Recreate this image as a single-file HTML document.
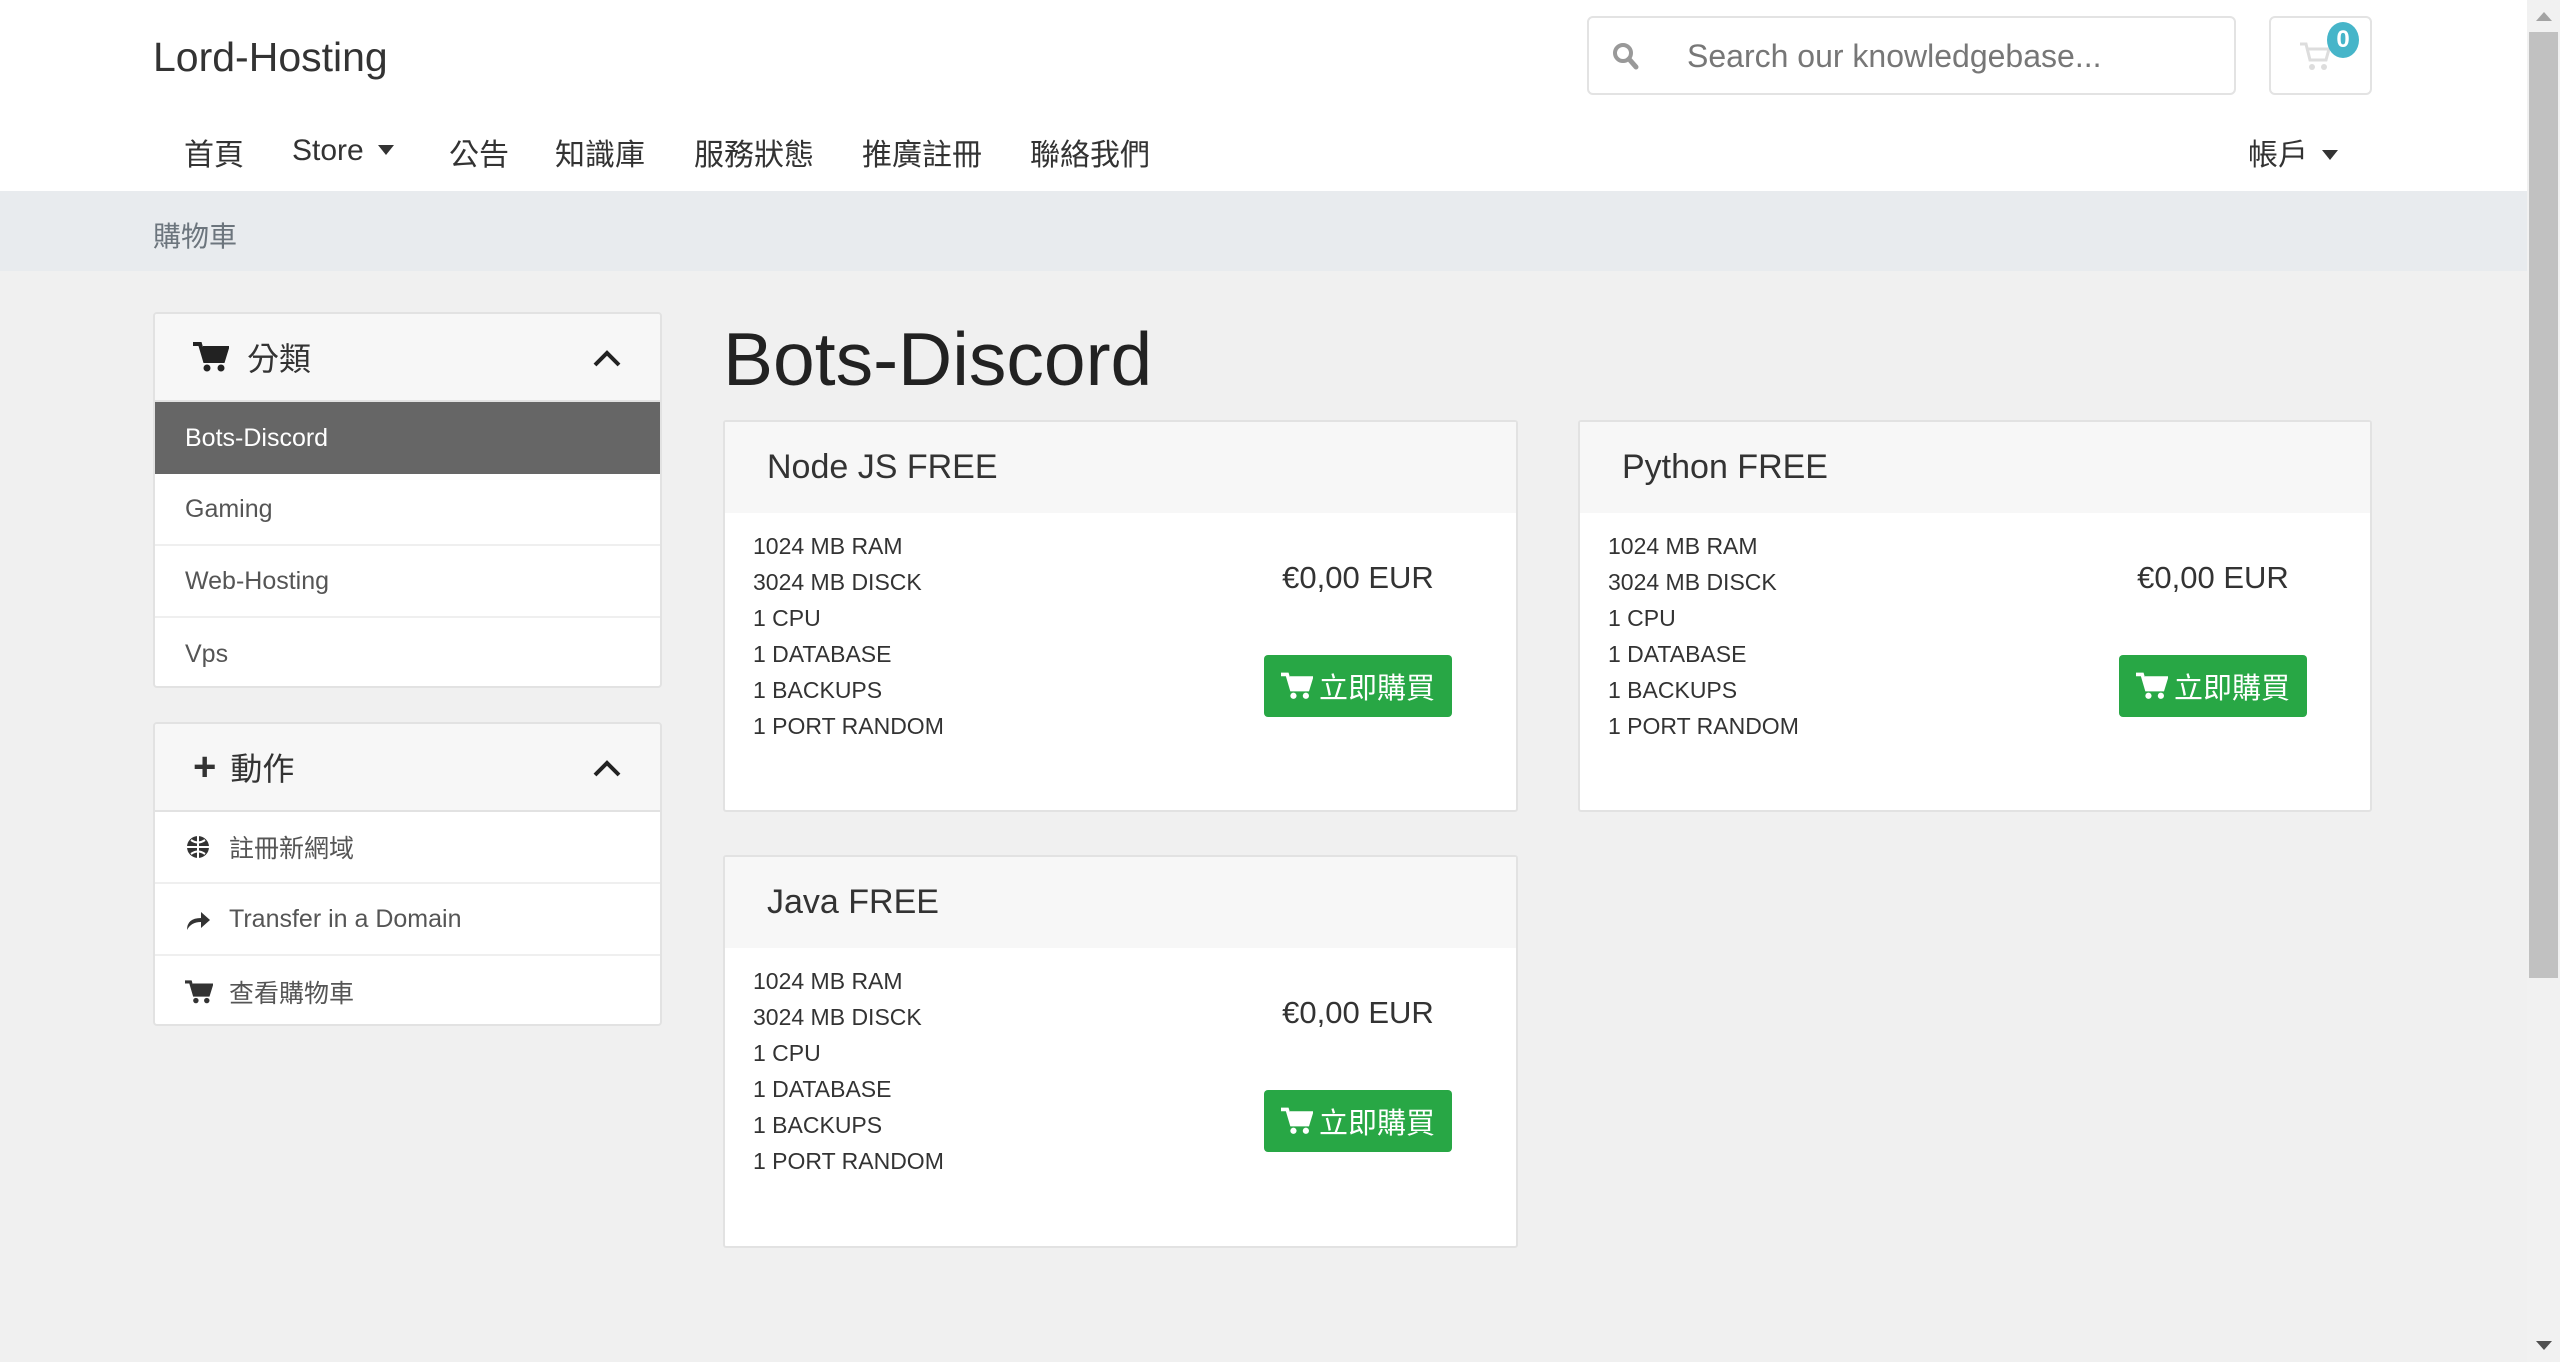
<!DOCTYPE html>
<html><head><meta charset="utf-8"><style>
*{box-sizing:border-box;margin:0;padding:0}
body{width:2560px;height:1362px;overflow:hidden;background:#f0f0f0;font-family:"Liberation Sans","Noto Sans CJK TC",sans-serif;color:#333;position:relative}
.a{position:absolute}
.hdr{left:0;top:0;width:2527px;height:191px;background:#fff}
.bc{left:0;top:191px;width:2527px;height:80px;background:#e8ebee}
.nav{top:130px;font-size:30px;color:#333;white-space:nowrap}
.caret{display:inline-block;width:0;height:0;border-left:8px solid transparent;border-right:8px solid transparent;border-top:10px solid #333;vertical-align:middle;margin-left:14px;margin-top:-4px}
.panel{background:#fff;border:2px solid #e2e2e2;border-radius:4px;overflow:hidden}
.ph{background:#f7f7f7;border-bottom:2px solid #e2e2e2;height:88px;display:flex;align-items:center;padding-left:38px;font-size:32px;position:relative}
.it{height:72px;display:flex;align-items:center;padding-left:30px;font-size:25px;color:#555;border-bottom:2px solid #efefef}
.it:last-child{border-bottom:none}
.card{background:#fff;border:2px solid #e2e2e2;border-radius:3px;overflow:hidden}
.ch{background:#f7f7f7;height:91px;display:flex;align-items:center;padding-left:42px;font-size:34px}
.feat{position:absolute;left:28px;top:106px;font-size:23px;line-height:36px;color:#333}
.price{position:absolute;left:540px;top:138px;width:186px;text-align:center;font-size:31px}
.btn{position:absolute;left:539px;top:233px;width:188px;height:62px;background:#28a745;border-radius:4px;color:#fff;font-size:29px;display:flex;align-items:center;justify-content:center;gap:6px}
.chev{position:absolute;right:38px;top:34px}
</style></head><body>
<div class="a hdr"></div>
<div class="a" style="left:153px;top:34px;font-size:41px;color:#333">Lord-Hosting</div>
<div class="a" style="left:1587px;top:16px;width:649px;height:79px;border:2px solid #e3e3e3;border-radius:6px;background:#fff"></div>
<svg class="a" style="left:1612px;top:42px" width="28" height="30" viewBox="0 0 28 30"><circle cx="11" cy="11" r="8" fill="none" stroke="#999" stroke-width="4"/><path d="M17 17l7 8" stroke="#999" stroke-width="5" stroke-linecap="round"/></svg>
<div class="a" style="left:1687px;top:38px;font-size:32px;color:#777">Search our knowledgebase...</div>
<div class="a" style="left:2269px;top:16px;width:103px;height:79px;border:2px solid #e3e3e3;border-radius:6px;background:#fff"></div>
<svg class="a" style="left:2298px;top:40px" width="34" height="32" viewBox="0 0 34 32"><path d="M2 4h6l4 16h16l3-11H10" fill="none" stroke="#ddd" stroke-width="3"/><circle cx="14" cy="27" r="3" fill="#ddd"/><circle cx="26" cy="27" r="3" fill="#ddd"/></svg>
<div class="a" style="left:2327px;top:22px;width:32px;height:36px;border-radius:50%;background:#46b5c9;color:#fff;font-size:24px;font-weight:bold;text-align:center;line-height:36px">0</div>

<div class="a nav" style="left:184px">首頁</div>
<div class="a nav" style="left:292px;top:134px">Store<span class="caret"></span></div>
<div class="a nav" style="left:449px">公告</div>
<div class="a nav" style="left:555px">知識庫</div>
<div class="a nav" style="left:694px">服務狀態</div>
<div class="a nav" style="left:862px">推廣註冊</div>
<div class="a nav" style="left:1030px">聯絡我們</div>
<div class="a nav" style="left:2248px">帳戶<span class="caret"></span></div>

<div class="a bc"></div>
<div class="a" style="left:153px;top:215px;font-size:28px;color:#6c757d">購物車</div>

<div class="a panel" style="left:153px;top:312px;width:509px;height:376px">
<div class="ph"><svg width="36" height="32" viewBox="0 0 36 32" style="margin-right:18px"><path d="M0 3h7l5 17h18l4-13H10" fill="none" stroke="#222" stroke-width="4"/><path d="M10 7h24l-4 13H12z" fill="#222"/><circle cx="14" cy="27" r="3.5" fill="#222"/><circle cx="28" cy="27" r="3.5" fill="#222"/></svg>分類
<svg class="chev" width="30" height="20" viewBox="0 0 30 20"><path d="M3 17L15 5l12 12" fill="none" stroke="#222" stroke-width="4"/></svg></div>
<div class="it" style="background:#666;color:#fff;border:none">Bots-Discord</div>
<div class="it">Gaming</div>
<div class="it">Web-Hosting</div>
<div class="it">Vps</div>
</div>

<div class="a panel" style="left:153px;top:722px;width:509px;height:304px">
<div class="ph"><span style="font-size:40px;font-weight:bold;margin-right:14px">+</span>動作
<svg class="chev" width="30" height="20" viewBox="0 0 30 20"><path d="M3 17L15 5l12 12" fill="none" stroke="#222" stroke-width="4"/></svg></div>
<div class="it"><svg width="26" height="26" viewBox="0 0 26 26" style="margin-right:18px"><circle cx="13" cy="13" r="11" fill="#333"/><path d="M2 13h22M13 2v22M6 6q7 5 14 0M6 20q7-5 14 0" stroke="#fff" stroke-width="2" fill="none"/></svg>註冊新網域</div>
<div class="it"><svg width="26" height="26" viewBox="0 0 26 26" style="margin-right:18px"><path d="M2 24q0-12 14-12V6l9 8-9 8v-6Q6 16 2 24z" fill="#333"/></svg>Transfer in a Domain</div>
<div class="it"><svg width="28" height="26" viewBox="0 0 36 32" style="margin-right:16px"><path d="M0 3h7l5 17h18l4-13H10" fill="none" stroke="#333" stroke-width="4"/><path d="M10 7h24l-4 13H12z" fill="#333"/><circle cx="14" cy="27" r="3.5" fill="#333"/><circle cx="28" cy="27" r="3.5" fill="#333"/></svg>查看購物車</div>
</div>

<div class="a" style="left:723px;top:316px;font-size:75px;color:#222">Bots-Discord</div>

<div class="a card" style="left:723px;top:420px;width:795px;height:392px">
<div class="ch">Node JS FREE</div>
<div class="feat">1024 MB RAM<br>3024 MB DISCK<br>1 CPU<br>1 DATABASE<br>1 BACKUPS<br>1 PORT RANDOM</div>
<div class="price">€0,00 EUR</div>
<div class="btn"><svg width="32" height="30" viewBox="0 0 36 32"><path d="M0 3h7l5 17h18l4-13H10" fill="none" stroke="#fff" stroke-width="4"/><path d="M10 7h24l-4 13H12z" fill="#fff"/><circle cx="14" cy="27" r="3.5" fill="#fff"/><circle cx="28" cy="27" r="3.5" fill="#fff"/></svg>立即購買</div>
</div>

<div class="a card" style="left:1578px;top:420px;width:794px;height:392px">
<div class="ch">Python FREE</div>
<div class="feat">1024 MB RAM<br>3024 MB DISCK<br>1 CPU<br>1 DATABASE<br>1 BACKUPS<br>1 PORT RANDOM</div>
<div class="price">€0,00 EUR</div>
<div class="btn"><svg width="32" height="30" viewBox="0 0 36 32"><path d="M0 3h7l5 17h18l4-13H10" fill="none" stroke="#fff" stroke-width="4"/><path d="M10 7h24l-4 13H12z" fill="#fff"/><circle cx="14" cy="27" r="3.5" fill="#fff"/><circle cx="28" cy="27" r="3.5" fill="#fff"/></svg>立即購買</div>
</div>

<div class="a card" style="left:723px;top:855px;width:795px;height:393px">
<div class="ch">Java FREE</div>
<div class="feat">1024 MB RAM<br>3024 MB DISCK<br>1 CPU<br>1 DATABASE<br>1 BACKUPS<br>1 PORT RANDOM</div>
<div class="price">€0,00 EUR</div>
<div class="btn"><svg width="32" height="30" viewBox="0 0 36 32"><path d="M0 3h7l5 17h18l4-13H10" fill="none" stroke="#fff" stroke-width="4"/><path d="M10 7h24l-4 13H12z" fill="#fff"/><circle cx="14" cy="27" r="3.5" fill="#fff"/><circle cx="28" cy="27" r="3.5" fill="#fff"/></svg>立即購買</div>
</div>

<div class="a" style="left:2527px;top:0;width:33px;height:1362px;background:#f1f1f1"></div>
<div class="a" style="left:2529px;top:32px;width:29px;height:946px;background:#c1c1c1"></div>
<div class="a" style="left:2536px;top:12px;width:0;height:0;border-left:8px solid transparent;border-right:8px solid transparent;border-bottom:9px solid #a3a3a3"></div>
<div class="a" style="left:2536px;top:1341px;width:0;height:0;border-left:8px solid transparent;border-right:8px solid transparent;border-top:9px solid #505050"></div>
</body></html>
